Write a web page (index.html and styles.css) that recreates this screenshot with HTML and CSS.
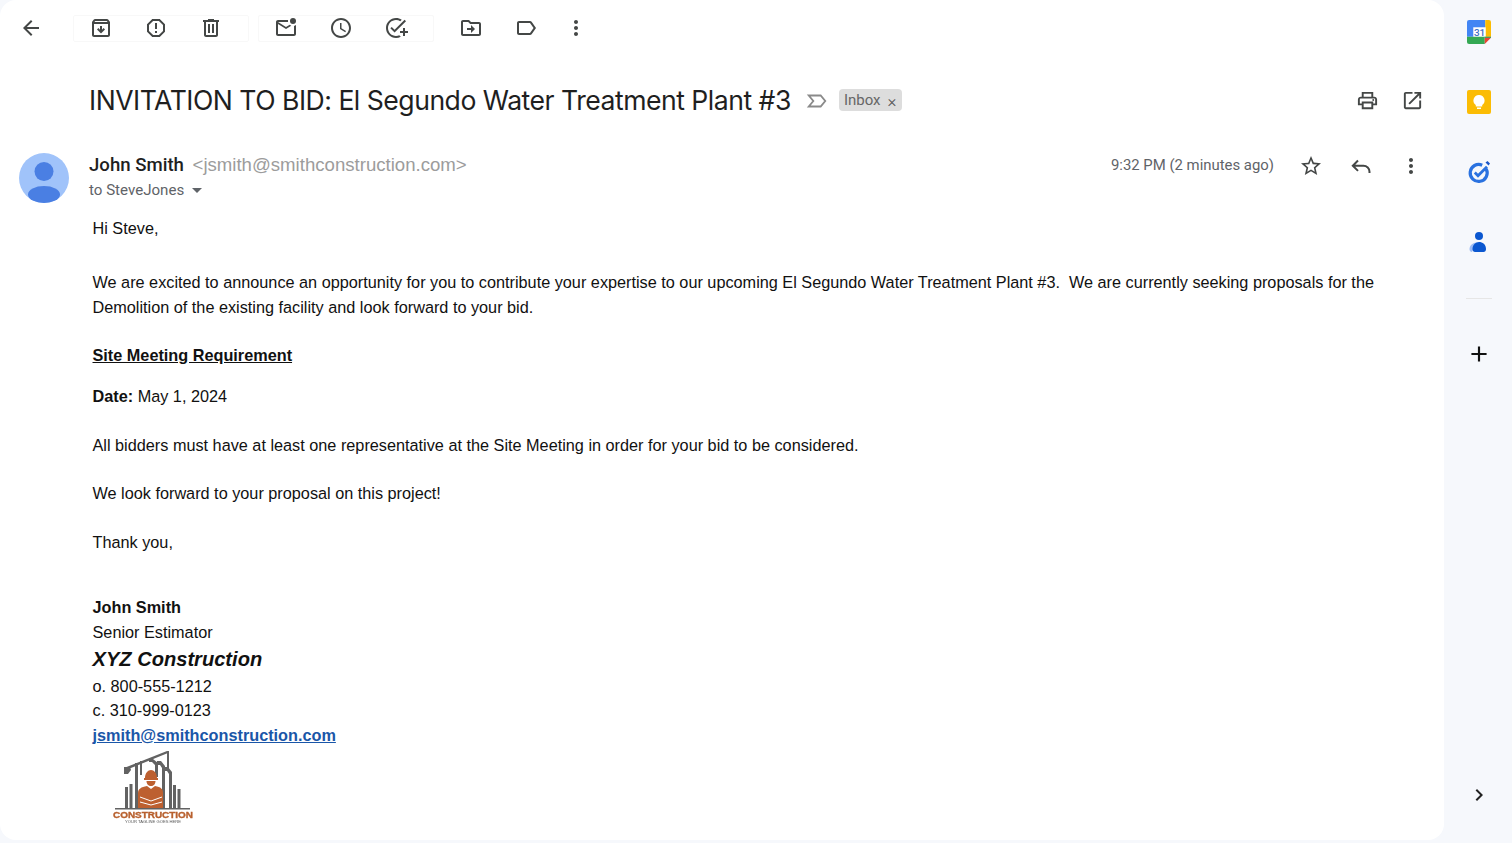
FILE: index.html
```html
<!DOCTYPE html>
<html lang="en">
<head>
    <meta charset="UTF-8">
    <meta name="viewport" content="width=device-width, initial-scale=1.0">
    <title>INVITATION TO BID: El Segundo Water Treatment Plant #3</title>
    <link rel="stylesheet" href="styles.css">
</head>
<body>
    <div class="app">
        <main class="mail">
            <nav class="toolbar">
                <span class="slot back"><svg viewBox="0 0 24 24"><path d="M20 11H7.83l5.59-5.59L12 4l-8 8 8 8 1.41-1.41L7.83 13H20v-2z"/></svg></span>
                <div class="group">
                    <span class="slot"><svg viewBox="0 0 24 24"><path d="M20.54 5.23l-1.39-1.68C18.88 3.21 18.47 3 18 3H6c-.47 0-.88.21-1.16.55L3.46 5.23C3.17 5.57 3 6.02 3 6.5V19c0 1.1.9 2 2 2h14c1.1 0 2-.9 2-2V6.5c0-.48-.17-.93-.46-1.27zM6.24 5h11.52l.83 1H5.42l.82-1zM5 19V8h14v11H5zm11-5.5l-4 4-4-4 1.41-1.41L11 13.67V10h2v3.67l1.59-1.59L16 13.5z"/></svg></span>
                    <span class="slot"><svg viewBox="0 0 24 24"><path d="M15.73 3H8.27L3 8.27v7.46L8.27 21h7.46L21 15.73V8.27L15.73 3zM19 14.9L14.9 19H9.1L5 14.9V9.1L9.1 5h5.8L19 9.1v5.8z"/><path d="M11 7h2v6h-2zM11 15h2v2h-2z"/></svg></span>
                    <span class="slot"><svg viewBox="0 0 24 24"><path d="M15 4V3H9v1H4v2h1v13c0 1.1.9 2 2 2h10c1.1 0 2-.9 2-2V6h1V4h-5zm2 15H7V6h10v13z"/><path d="M9 8h2v9H9zm4 0h2v9h-2z"/></svg></span>
                </div>
                <div class="group">
                    <span class="slot"><svg viewBox="0 0 24 24"><path d="M22 8.98V18c0 1.1-.9 2-2 2H4c-1.1 0-2-.9-2-2V6c0-1.1.9-2 2-2h10.1c-.06.32-.1.66-.1 1s.04.68.1 1H4l8 5 3.67-2.29c.47.43 1.02.76 1.63.98L12 13 4 8v10h16V9.9c.74-.15 1.42-.48 2-.92z"/><circle cx="19" cy="5" r="3"/></svg></span>
                    <span class="slot"><svg viewBox="0 0 24 24"><path d="M11.99 2C6.47 2 2 6.48 2 12s4.47 10 9.99 10C17.52 22 22 17.52 22 12S17.52 2 11.99 2zM12 20c-4.42 0-8-3.58-8-8s3.58-8 8-8 8 3.58 8 8-3.58 8-8 8zm.5-13H11v6l5.25 3.15.75-1.23-4.5-2.67z"/></svg></span>
                    <span class="slot"><svg viewBox="0 0 24 24"><path d="M22 5.18L10.59 16.6l-4.24-4.24 1.41-1.41 2.83 2.83 10-10L22 5.18zM12 20c-4.41 0-8-3.59-8-8s3.59-8 8-8c1.57 0 3.04.46 4.28 1.25l1.45-1.45C16.1 2.67 14.13 2 12 2 6.48 2 2 6.48 2 12s4.48 10 10 10c1.73 0 3.36-.44 4.78-1.22l-1.5-1.5c-1 .46-2.11.72-3.28.72zm7-5h-3v2h3v3h2v-3h3v-2h-3v-3h-2v3z"/></svg></span>
                </div>
                <span class="slot"><svg viewBox="0 0 24 24"><path d="M20 6h-8l-2-2H4c-1.1 0-1.99.9-1.99 2L2 18c0 1.1.9 2 2 2h16c1.1 0 2-.9 2-2V8c0-1.1-.9-2-2-2zm0 12H4V6h5.17l2 2H20v10zm-8-4H8v-2h4V9l4 4-4 4v-3z"/></svg></span>
                <span class="slot"><svg viewBox="0 0 24 24"><path d="M17.63 5.84C17.27 5.33 16.67 5 16 5L5 5.01C3.9 5.01 3 5.9 3 7v10c0 1.1.9 1.99 2 1.99L16 19c.67 0 1.27-.33 1.63-.84L22 12l-4.37-6.16zM16 17H5V7h11l3.55 5L16 17z"/></svg></span>
                <span class="slot more"><svg viewBox="0 0 24 24"><path d="M12 8c1.1 0 2-.9 2-2s-.9-2-2-2-2 .9-2 2 .9 2 2 2zm0 2c-1.1 0-2 .9-2 2s.9 2 2 2 2-.9 2-2-.9-2-2-2zm0 6c-1.1 0-2 .9-2 2s.9 2 2 2 2-.9 2-2-.9-2-2-2z"/></svg></span>
            </nav>

            <header class="subject-row">
                <h1 class="subject">INVITATION TO BID: El Segundo Water Treatment Plant #3</h1>
                <svg class="importance" viewBox="0 0 24 24"><path d="M3 6h13l5 6-5 6H3l5-6z"/></svg>
                <span class="chip">Inbox <span class="chip-x">×</span></span>
                <div class="subject-actions">
                    <svg viewBox="0 0 24 24"><path d="M19 8h-1V3H6v5H5c-1.66 0-3 1.34-3 3v6h4v4h12v-4h4v-6c0-1.66-1.34-3-3-3zM8 5h8v3H8V5zm8 12v2H8v-4h8v2zm2-2v-2H6v2H4v-4c0-.55.45-1 1-1h14c.55 0 1 .45 1 1v4h-2z"/><circle cx="18" cy="11.5" r="1"/></svg>
                    <svg viewBox="0 0 24 24"><path d="M19 19H5V5h7V3H5c-1.11 0-2 .9-2 2v14c0 1.1.89 2 2 2h14c1.1 0 2-.9 2-2v-7h-2v7zM14 3v2h3.59l-9.83 9.83 1.41 1.41L19 6.41V10h2V3h-7z"/></svg>
                </div>
            </header>

            <section class="sender-row">
                <svg class="avatar" viewBox="0 0 50 50">
                    <circle cx="25" cy="25" r="25" fill="#a0c3fa"/>
                    <circle cx="25" cy="18.500" r="9.500" fill="#4a7fe3"/>
                    <ellipse cx="25" cy="41.500" rx="16" ry="8.500" fill="#4a7fe3"/>
                </svg>
                <div class="sender-info">
                    <div class="sender-line"><span class="sender-name">John Smith</span> <span class="sender-mail">&lt;jsmith@smithconstruction.com&gt;</span></div>
                    <div class="to-line">to SteveJones <span class="caret"></span></div>
                </div>
                <div class="sender-meta">
                    <span class="time">9:32 PM (2 minutes ago)</span>
                    <svg viewBox="0 0 24 24"><path d="M22 9.24l-7.19-.62L12 2 9.19 8.63 2 9.24l5.46 4.73L5.82 21 12 17.27 18.18 21l-1.63-7.03L22 9.24zM12 15.4l-3.76 2.27 1-4.28-3.32-2.88 4.38-.38L12 6.1l1.71 4.04 4.38.38-3.32 2.88 1 4.28L12 15.4z"/></svg>
                    <svg viewBox="0 0 24 24"><path class="line" d="M9 6.500 3.800 11.700 9 16.900M4 11.700h10.500a6 6 0 0 1 6 6v1.300"/></svg>
                    <svg viewBox="0 0 24 24"><path d="M12 8c1.100 0 2-.9 2-2s-.9-2-2-2-2 .9-2 2 .9 2 2 2zm0 2c-1.100 0-2 .9-2 2s.9 2 2 2 2-.9 2-2-.9-2-2-2zm0 6c-1.100 0-2 .9-2 2s.9 2 2 2 2-.9 2-2-.9-2-2-2z"/></svg>
                </div>
            </section>

            <article class="message">
                <p class="gap-29">Hi Steve,</p>
                <p class="gap-23">We are excited to announce an opportunity for you to contribute your expertise to our upcoming El Segundo Water Treatment Plant #3.&nbsp; We are currently seeking proposals for the Demolition of the existing facility and look forward to your bid.</p>
                <p class="gap-16 heading">Site Meeting Requirement</p>
                <p class="gap-24"><b>Date:</b> May 1, 2024</p>
                <p class="gap-23">All bidders must have at least one representative at the Site Meeting in order for your bid to be considered.</p>
                <p class="gap-24">We look forward to your proposal on this project!</p>
                <p class="gap-40">Thank you,</p>
                <div class="signature">
                    <b>John Smith</b>
                    <span>Senior Estimator</span>
                    <span class="company">XYZ Construction</span>
                    <span class="office">o. 800-555-1212</span>
                    <span>c. 310-999-0123</span>
                    <a href="#">jsmith@smithconstruction.com</a>
                </div>
                <svg class="logo" viewBox="0 0 80 72">
                    <g fill="#626262">
                        <path d="M11 17 54 0l1 2-42 17z"/>
                        <path d="M11 16h6l1 3-3 4h-4z"/>
                        <rect x="54" y="0" width="2" height="18"/>
                        <rect x="22" y="12" width="3" height="45"/>
                        <rect x="27" y="10" width="2" height="14"/>
                        <path d="M36 8h4l5 4v14h-3V14l-3-3h-3z"/>
                        <path d="M44 10h4l4 5v42h-3V17l-2-3h-3z"/>
                        <path d="M52 16h3l4 5v36h-3V23l-2-3h-2z"/>
                        <rect x="12" y="36" width="3" height="21"/>
                        <rect x="16.500" y="33" width="3" height="24"/>
                        <rect x="60" y="34" width="3" height="23"/>
                        <rect x="64.500" y="38" width="3" height="19"/>
                        <rect x="2" y="57" width="75" height="1.500"/>
                    </g>
                    <g fill="#bd6030">
                        <path d="M32 27c0-5 3-8 6-8s6 3 6 8h1v2H31v-2z"/>
                        <path d="M33.500 30h9c0 3-2 5-4.500 5s-4.500-2-4.500-5z"/>
                        <path d="M25 57V42c0-4 3-6 9-7l4 3 4-3c6 1 8 3 8 7v15z"/>
                    </g>
                    <path d="M27 46l11 4 11-4M27 51l11 3 11-3" fill="none" stroke="#fff" stroke-width="1"/>
                    <text class="logo-name" x="40" y="67" text-anchor="middle" textLength="80" lengthAdjust="spacingAndGlyphs">CONSTRUCTION</text>
                    <text class="logo-tag" x="40" y="71.500" text-anchor="middle" textLength="56" lengthAdjust="spacingAndGlyphs">YOUR TAGLINE GOES HERE</text>
                </svg>
            </article>
        </main>

        <aside class="side">
            <svg class="side-icon" viewBox="0 0 23 23">
                <path fill="#fff" d="M6 7h12v9H6z"/>
                <path fill="#4285f4" d="M2 0h15.500v7H6v9H0V2a2 2 0 0 1 2-2z"/>
                <path fill="#fbbc04" d="M17.500 0H21a2 2 0 0 1 2 2v14h-5V7h-.5z"/>
                <path fill="#34a853" d="M0 16h17v7H2a2 2 0 0 1-2-2z"/>
                <path fill="#ea4335" d="M17 23v-6h6z"/>
                <path fill="#188038" d="M17 16h6v1h-6z"/>
                <text class="cal-day" x="12" y="15" text-anchor="middle">31</text>
            </svg>
            <svg class="side-icon" viewBox="0 0 24 24">
                <rect width="24" height="24" rx="2" fill="#fbbc04"/>
                <path fill="#fff" d="M12 5a5.500 5.500 0 0 0-3.200 10v1.500h6.400V15A5.500 5.500 0 0 0 12 5zM10 17.500h4V19h-4z"/>
            </svg>
            <svg class="side-icon" viewBox="0 0 24 24">
                <path fill="none" stroke="#2a72e0" stroke-width="3.200" d="M19.200 9a8.500 8.500 0 1 1-4-3.800"/>
                <path fill="none" stroke="#2a72e0" stroke-width="2.800" d="M7.800 12.500l3.200 3.200 9-9"/>
                <path fill="#1a56c8" d="M18.500 2.500l2-1.500 2.500 2.500-1.500 2z"/>
            </svg>
            <svg class="side-icon" viewBox="0 0 24 24">
                <path fill="#9dbcf5" d="M5 22c-1.500 0-2.500-1-2.500-3 0-3 2.500-6 7-6.500z"/>
                <circle cx="12" cy="6" r="4" fill="#0b57d0"/>
                <path fill="#0b57d0" d="M8 22c-1.500 0-2.500-1-2.500-3 0-4 3-7 6.500-7s7 2.500 7 7c0 2-1 3-2.500 3z"/>
            </svg>
            <hr class="side-rule">
            <svg class="side-plus" viewBox="0 0 24 24"><path d="M19 13h-6v6h-2v-6H5v-2h6V5h2v6h6z"/></svg>
            <svg class="side-chevron" viewBox="0 0 24 24"><path d="M8.590 16.590 13.170 12 8.590 7.410 10 6l6 6-6 6z"/></svg>
        </aside>
    </div>
</body>
</html>
```

FILE: styles.css
```css
html, body {
    margin: 0;
    padding: 0;
    height: 843px;
    overflow: hidden;
    background-color: #f6f8fc;
}
.app {
    display: flex;
    height: 843px;
    font-family: 'Roboto', sans-serif;
}
.mail {
    box-sizing: border-box;
    width: 1444px;
    height: 840px;
    flex: none;
    background-color: #fff;
    border-radius: 16px;
    overflow: hidden;
}
svg {
    fill: #444746;
    flex: none;
}

/* toolbar */
.toolbar {
    display: flex;
    align-items: center;
    height: 56px;
    box-sizing: border-box;
    padding-left: 19px;
}
.slot {
    display: flex;
    align-items: center;
    justify-content: center;
    width: 55px;
    height: 24px;
}
.slot svg {
    width: 24px;
    height: 24px;
}
.back {
    width: 24px;
    margin-right: 30px;
}
.group {
    display: flex;
    align-items: center;
    box-sizing: border-box;
    width: 176px;
    height: 27px;
    margin-right: 9px;
    border: 1px solid #f8f8f8;
    border-radius: 2px;
}
.group .slot:first-child {
    margin-left: -1px;
}
.more {
    margin-left: -5px;
}

/* subject */
.subject-row {
    display: flex;
    align-items: center;
    height: 89px;
    padding-left: 89px;
    padding-right: 20px;
}
.subject {
    margin: -2px 0 0;
    font-family: 'Inter', sans-serif;
    font-size: 26.6px;
    font-weight: 400;
    letter-spacing: -0.5px;
    color: #1f1f1f;
    white-space: nowrap;
}
.importance {
    width: 22px;
    height: 22px;
    margin-left: 15px;
    fill: none;
    stroke: #8a8a8a;
    stroke-width: 2;
}
.chip {
    display: flex;
    align-items: center;
    gap: 6px;
    height: 22px;
    margin-left: 11px;
    margin-top: -2px;
    padding: 0 6px 0 5px;
    background-color: #ddd;
    border-radius: 4px;
    font-size: 15px;
    color: #666;
}
.chip-x {
    margin-top: 2px;
    margin-left: 1px;
    font-size: 17px;
    font-weight: 300;
    color: #555;
}
.subject-actions {
    display: flex;
    gap: 22px;
    margin-left: auto;
    margin-top: -1px;
}
.subject-actions svg {
    width: 23px;
    height: 23px;
}

/* sender */
.sender-row {
    display: flex;
    height: 50px;
    margin-top: 8px;
    padding-left: 19px;
    padding-right: 21px;
}
.avatar {
    width: 50px;
    height: 50px;
    margin-right: 20px;
}
.sender-info {
    flex: 1;
}
.sender-line {
    height: 23px;
    line-height: 23px;
    font-size: 18.6px;
    color: #1f1f1f;
}
.sender-name {
    font-weight: 500;
}
.sender-mail {
    margin-left: 4px;
    font-family: 'Liberation Sans', sans-serif;
    color: #9c9c9c;
}
.to-line {
    margin-top: 2px;
    line-height: 24px;
    font-size: 15.1px;
    color: #5f6368;
}
.caret {
    display: inline-block;
    width: 0;
    height: 0;
    margin-left: 4px;
    vertical-align: 2px;
    border-left: 5px solid transparent;
    border-right: 5px solid transparent;
    border-top: 5px solid #5f6368;
}
.sender-meta {
    display: flex;
    align-items: flex-start;
    gap: 26px;
}
.sender-meta svg {
    width: 24px;
    height: 24px;
    margin-top: 1px;
}
.sender-meta .line {
    fill: none;
    stroke: #444746;
    stroke-width: 2;
}
.time {
    margin-right: -1px;
    line-height: 24px;
    font-size: 14.9px;
    color: #5f6368;
}

/* message body */
.message {
    margin-top: 13px;
    padding-left: 92.5px;
    padding-right: 60px;
    font-family: 'Liberation Sans', sans-serif;
    font-size: 16.26px;
    line-height: 25px;
    color: #111;
}
.message p {
    margin: 0;
}
.message .gap-16 { margin-bottom: 16px; }
.message .gap-23 { margin-bottom: 23px; }
.message .gap-24 { margin-bottom: 24px; }
.message .gap-29 { margin-bottom: 29px; }
.message .gap-40 { margin-bottom: 40px; }
.heading {
    font-weight: 700;
    text-decoration: underline;
}
.signature {
    display: flex;
    flex-direction: column;
    align-items: flex-start;
}
.signature a {
    font-weight: 700;
    color: #1a56a8;
}
.company {
    font-size: 20.1px;
    font-weight: 700;
    font-style: italic;
    line-height: 29px;
}
.office {
    line-height: 24px;
}
.logo {
    display: block;
    width: 80px;
    height: 72px;
    margin-top: 3px;
    margin-left: 20.5px;
    filter: blur(0.3px);
}
.logo-name {
    font-family: 'Liberation Sans', sans-serif;
    font-size: 9px;
    font-weight: 700;
    fill: #b8602e;
    stroke: #b8602e;
    stroke-width: 0.35;
}
.logo-tag {
    font-family: 'Liberation Sans', sans-serif;
    font-size: 3.5px;
    fill: #555;
}

/* side panel */
.side {
    flex: 1;
    display: flex;
    flex-direction: column;
    align-items: center;
    height: 840px;
    box-sizing: border-box;
    padding-top: 20px;
    padding-left: 2px;
    padding-bottom: 33px;
}
.side-icon {
    width: 24px;
    height: 24px;
    margin-bottom: 46px;
}
.side-rule {
    width: 26px;
    margin: -2px 0 0;
    border: 0;
    border-top: 1px solid #e6e6e6;
}
.cal-day {
    font-family: 'Roboto', sans-serif;
    font-size: 9.5px;
    font-weight: 500;
    fill: #3f6fc4;
}
.side-plus {
    width: 26px;
    height: 26px;
    margin-top: 42px;
    fill: #111;
}
.side-chevron {
    width: 24px;
    height: 24px;
    margin-top: auto;
    fill: #222;
}
```
